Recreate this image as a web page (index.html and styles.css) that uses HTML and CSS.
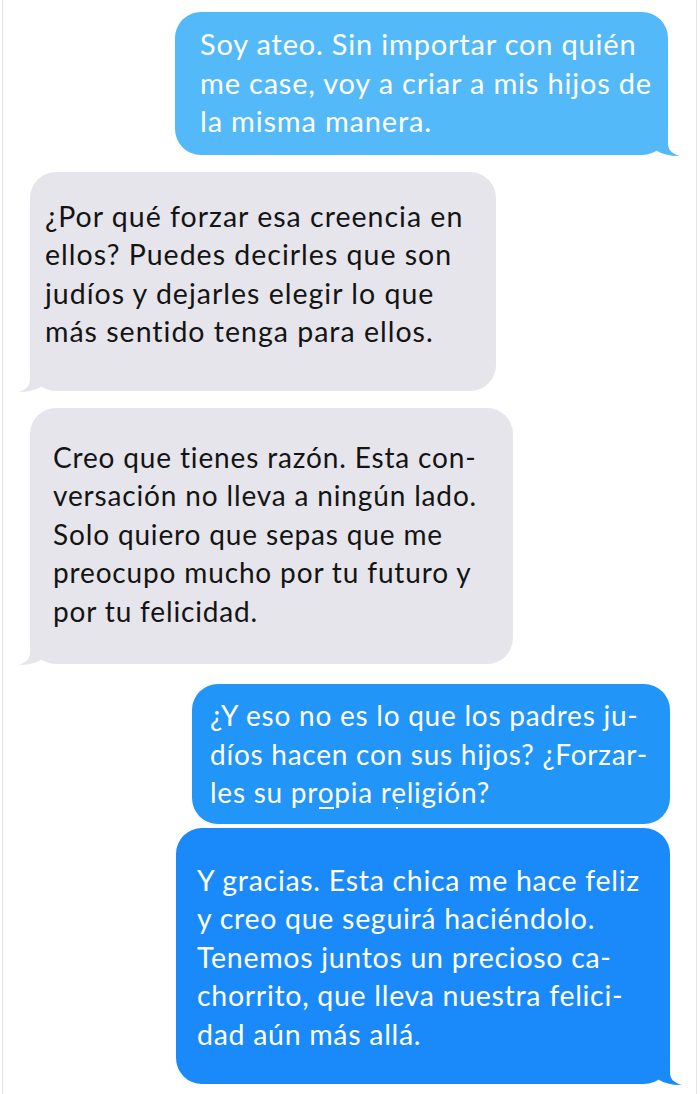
FILE: index.html
```html
<!DOCTYPE html>
<html lang="es">
<head>
<meta charset="utf-8">
<title>Chat</title>
<link rel="stylesheet" href="styles.css">
</head>
<body>
<div class="chat">
  <div class="bubble out light b1">
    <p>Soy ateo. Sin importar con quién<br>me case, voy a criar a mis hijos de<br>la misma manera.</p>
    <svg class="tail tail-right" viewBox="0 0 28 28" width="28" height="28"><path d="M14 0 L14 14 C14 21 18 25 26 27 C19 27.5 10 26 3 22 L2 10 Z"/></svg>
  </div>
  <div class="bubble in b2">
    <p>¿Por qué forzar esa creencia en<br>ellos? Puedes decirles que son<br>judíos y dejarles elegir lo que<br>más sentido tenga para ellos.</p>
    <svg class="tail tail-left" viewBox="0 0 28 28" width="28" height="28"><path d="M14 0 L14 14 C14 21 18 25 26 27 C19 27.5 10 26 3 22 L2 10 Z"/></svg>
  </div>
  <div class="bubble in b3">
    <p>Creo que tienes razón. Esta con-<br>versación no lleva a ningún lado.<br>Solo quiero que sepas que me<br>preocupo mucho por tu futuro y<br>por tu felicidad.</p>
    <svg class="tail tail-left" viewBox="0 0 28 28" width="28" height="28"><path d="M14 0 L14 14 C14 21 18 25 26 27 C19 27.5 10 26 3 22 L2 10 Z"/></svg>
  </div>
  <div class="bubble out mid b4">
    <p>¿Y eso no es lo que los padres ju-<br>díos hacen con sus hijos? ¿Forzar-<br>les su pr<span class="mark mark-bar">o</span>pia r<span class="mark mark-dot">e</span>ligión?</p>
  </div>
  <div class="bubble out deep b5">
    <p>Y gracias. Esta chica me hace feliz<br>y creo que seguirá haciéndolo.<br>Tenemos juntos un precioso ca-<br>chorrito, que lleva nuestra felici-<br>dad aún más allá.</p>
    <svg class="tail tail-right" viewBox="0 0 28 28" width="28" height="28"><path d="M14 0 L14 14 C14 21 18 25 26 27 C19 27.5 10 26 3 22 L2 10 Z"/></svg>
  </div>
</div>
</body>
</html>
```

FILE: styles.css
```css
html, body {
  margin: 0;
  padding: 0;
  background: #ffffff;
}

.chat {
  box-sizing: border-box;
  width: 695px;
  min-height: 1094px;
  margin-left: 2px;
  border-left: 1px solid #e4e4e6;
  border-right: 1px solid #e4e4e6;
  padding-top: 12px;
  display: flex;
  flex-direction: column;
  font-family: Lato, "Liberation Sans", sans-serif;
  font-size: 28px;
  line-height: 38.5px;
  font-variant-ligatures: none;
  font-feature-settings: "liga" 0;
}

.bubble {
  position: relative;
  box-sizing: border-box;
  border-radius: 26px;
}

.bubble p {
  margin: 0;
  white-space: nowrap;
}

.out {
  align-self: flex-end;
  color: #ffffff;
}

.in {
  align-self: flex-start;
  background: #e6e5eb;
  fill: #e6e5eb;
  color: #141414;
  margin-left: 27px;
}

.light { background: #53b9f9; fill: #53b9f9; }
.mid { background: #2195f8; }
.deep { background: #1a8afa; fill: #1a8afa; }

.b1 {
  width: 493px;
  margin-right: 28px;
  padding: 13px 10px 14px 25px;
  font-size: 29px;
  letter-spacing: 0.8px;
}

.b2 {
  width: 466px;
  margin-top: 17px;
  padding: 25px 5px 40px 15px;
  font-size: 28.5px;
  letter-spacing: 1px;
}

.b3 {
  width: 483px;
  margin-top: 17px;
  padding: 30px 5px 34px 23px;
  letter-spacing: 0.85px;
}

.b4 {
  width: 478px;
  margin-top: 20px;
  margin-right: 26px;
  padding: 12px 5px 12px 18px;
  letter-spacing: 0.75px;
}

.b5 {
  width: 494px;
  margin-top: 4px;
  margin-right: 26px;
  padding: 33px 5px 31px 21px;
  font-size: 28.5px;
  letter-spacing: 0.7px;
}

.tail {
  position: absolute;
  bottom: -2px;
  display: block;
}

.tail-right {
  right: -14px;
}

.tail-left {
  left: -14px;
  transform: scaleX(-1);
}

.mark {
  position: relative;
}

.mark::after {
  content: "";
  position: absolute;
  background: #ffffff;
}

.mark-bar::after {
  left: 1px;
  right: 0;
  bottom: 0;
  height: 2px;
}

.mark-dot::after {
  left: 5px;
  width: 2px;
  bottom: 0;
  height: 2px;
}
```
